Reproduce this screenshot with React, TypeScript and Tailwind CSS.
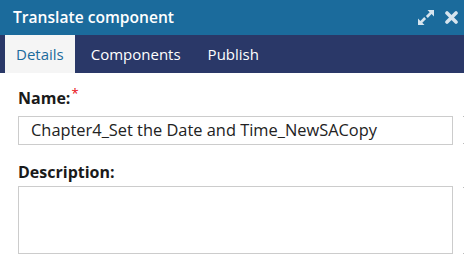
function ExpandIcon() {
  return (
    <svg width="18" height="17" viewBox="0 0 18 17" fill="none">
      <path d="M10.5 1H17v6.5l-2.4-2.4-3.8 3.8-1.9-1.9 3.8-3.8z" fill="#d6e4ee" />
      <path d="M7.5 16H1V9.5l2.4 2.4 3.8-3.8 1.9 1.9-3.8 3.8z" fill="#d6e4ee" />
    </svg>
  );
}

function CloseIcon() {
  return (
    <svg width="13" height="13" viewBox="0 0 13 13">
      <path d="M2 2l9 9M11 2l-9 9" stroke="#d6e4ee" strokeWidth="3.6" strokeLinecap="round" />
    </svg>
  );
}

export default function App() {
  return (
    <div className="w-[464px] h-[259px] overflow-hidden bg-white font-['Open_Sans',sans-serif]">
      {/* Title bar */}
      <div className="h-[35px] bg-[#1b6b9c] flex items-center justify-between pl-[13px] pr-[6px]">
        <span className="text-white text-[15.6px] font-semibold">Translate component</span>
        <div className="flex items-center gap-[10px]">
          <ExpandIcon />
          <CloseIcon />
        </div>
      </div>

      {/* Tabs */}
      <div className="h-[38px] bg-[#2a3868] flex items-stretch pl-[5px]">
        <button className="px-[11px] bg-[#f5f5f5] text-[#1b6b9c] text-[15px]">Details</button>
        <button className="px-[16px] text-white text-[15px]">Components</button>
        <button className="px-[11px] text-white text-[15px]">Publish</button>
      </div>

      {/* Form */}
      <div className="px-[18px] pt-[15px] relative">
        <label className="block text-[16px] font-bold text-[#1a1a1a] leading-[20px]">
          Name:<sup className="text-red-600 font-normal text-[13px] ml-[1px]">*</sup>
        </label>
        <div className="mt-[8px] w-[435px] h-[29px] border border-[#cccccc] flex items-center pl-[12px] text-[16.4px] text-[#222]">
          Chapter4_Set the Date and Time_NewSACopy
        </div>
        <label className="block mt-[17px] text-[16px] font-bold text-[#1a1a1a] leading-[20px]">
          Description:
        </label>
        <div className="mt-[4px] w-[435px] h-[68px] border border-[#cccccc]" />

        <div className="absolute left-[463px] top-[43px] w-[4px] h-[28px] border-y border-[#bbb]" />
        <div className="absolute left-[463px] top-[114px] w-[4px] h-[67px] border-y border-[#bbb]" />
      </div>
    </div>
  );
}
